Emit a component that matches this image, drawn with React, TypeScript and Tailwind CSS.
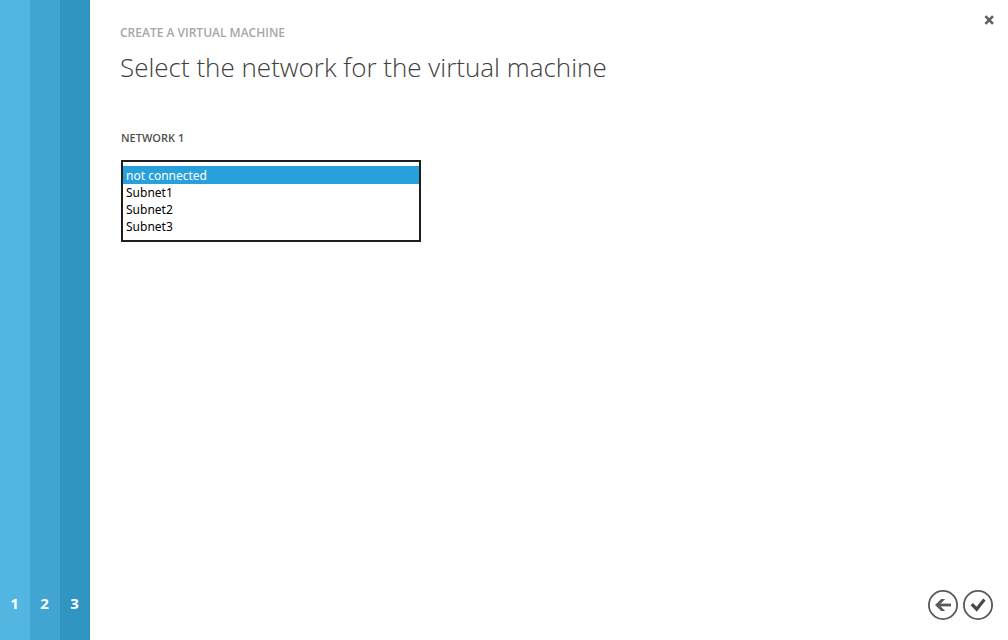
import { useState } from "react";

const steps = [
  { label: "1", tone: "bg-[#52b6e1]" },
  { label: "2", tone: "bg-[#42a5d1]" },
  { label: "3", tone: "bg-[#3095c0]" },
];

const networks = ["not connected", "Subnet1", "Subnet2", "Subnet3"];

export default function App() {
  const [network, setNetwork] = useState(networks[0]);

  return (
    <div className="flex min-h-screen bg-white font-['Open_Sans','Noto_Sans',sans-serif] text-[#505050]">
      <nav aria-label="Wizard steps" className="flex shrink-0">
        {steps.map((step) => (
          <button
            key={step.label}
            type="button"
            className={`flex w-[30px] items-end justify-center pr-px pb-[27px] text-[15px] leading-5 font-bold text-white ${step.tone}`}
          >
            {step.label}
          </button>
        ))}
      </nav>

      <main className="flex flex-1 flex-col pt-3 pr-[14px] pb-5 pl-[30px]">
        <header className="flex items-start justify-between">
          <div className="pt-[13px]">
            <p className="text-xs leading-4 font-semibold text-[#a6a6a6]">CREATE A VIRTUAL MACHINE</p>
            <h1 className="pt-2 text-[26px] leading-9 font-light text-[#404040]">
              Select the network for the virtual machine
            </h1>
          </div>
          <button type="button" aria-label="Close" className="flex h-4 w-[10px] items-center justify-center">
            <svg viewBox="0 0 10 10" className="size-[10px]" fill="none" stroke="#606060" strokeWidth="2.6">
              <path d="M1.4 1.2 9 8.8M9 1.2 1.4 8.8" />
            </svg>
          </button>
        </header>

        <div className="flex flex-col items-start pt-[45px] pl-px">
          <label htmlFor="network" className="text-[11px] leading-4 font-semibold">
            NETWORK 1
          </label>
          <select
            id="network"
            size={4}
            value={network}
            onChange={(event) => setNetwork(event.target.value)}
            className="mt-[14px] h-[82px] w-[300px] overflow-hidden border-2 border-[#1e1e1e] bg-white pt-1 font-['Noto_Sans','Open_Sans',sans-serif] text-xs text-black outline-none"
          >
            {networks.map((name) => (
              <option
                key={name}
                value={name}
                className="min-h-0 px-[3px] py-0 leading-[17px] checked:bg-linear-to-r checked:from-[#27a0dc] checked:to-[#27a0dc] checked:pt-px checked:[-webkit-text-fill-color:#fff]"
              >
                {name}
              </option>
            ))}
          </select>
        </div>

        <footer className="mt-auto flex justify-end gap-[5px] pr-px">
          <button type="button" aria-label="Back">
            <svg viewBox="0 0 30 30" className="size-[30px]" fill="none" stroke="#5a5a5a">
              <circle cx="15" cy="15" r="14.1" strokeWidth="1.8" />
              <path d="M9 15H23" strokeWidth="2.8" />
              <path d="M13.2 9H17.2L11.2 15 17.2 21H13.2L7 15Z" fill="#5a5a5a" stroke="none" />
            </svg>
          </button>
          <button type="button" aria-label="Finish">
            <svg viewBox="0 0 30 30" className="size-[30px]" fill="none" stroke="#5a5a5a">
              <circle cx="15" cy="15" r="14.1" strokeWidth="1.8" />
              <path d="M8.8 14.2 13.6 19.2 21.4 9.4" stroke="#484848" strokeWidth="3.2" />
            </svg>
          </button>
        </footer>
      </main>
    </div>
  );
}
